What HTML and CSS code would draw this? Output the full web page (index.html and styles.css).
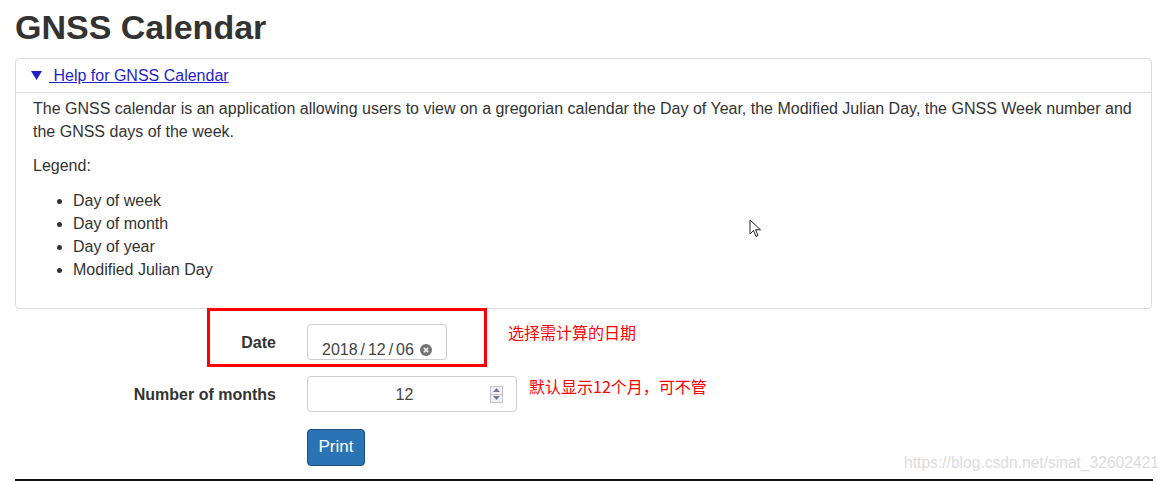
FILE: index.html
```html
<!DOCTYPE html>
<html lang="en">
<head>
<meta charset="utf-8">
<title>GNSS Calendar</title>
<link rel="stylesheet" href="styles.css">
</head>
<body>
<div class="page">
  <h1 class="title">GNSS Calendar</h1>
  <div class="panel">
    <div class="panel-heading">
      <svg class="caret" width="11" height="9" viewBox="0 0 11 9"><path d="M0 0 H11 L5.5 9 Z" fill="#1f1fc8"/></svg>
      <a class="help-link" href="#">&nbsp;Help for GNSS Calendar</a>
    </div>
    <div class="panel-body">
      <p class="para">The GNSS calendar is an application allowing users to view on a gregorian calendar the Day of Year, the Modified Julian Day, the GNSS Week number and the GNSS days of the week.</p>
      <p class="para">Legend:</p>
      <ul class="legend">
        <li>Day of week</li>
        <li>Day of month</li>
        <li>Day of year</li>
        <li>Modified Julian Day</li>
      </ul>
    </div>
  </div>

  <div class="form">
    <div class="row">
      <div class="label">Date</div>
      <div class="date-input">
        <span class="date-text">2018 / 12 / 06</span>
        <svg class="clear" width="12" height="12" viewBox="0 0 12 12"><circle cx="6" cy="6" r="6" fill="#737373"/><path d="M3.8 3.8 L8.2 8.2 M8.2 3.8 L3.8 8.2" stroke="#fff" stroke-width="1.6"/></svg>
      </div>
      <div class="note note-date">选择需计算的日期</div>
      <div class="redbox"></div>
    </div>
    <div class="row">
      <div class="label">Number of months</div>
      <div class="num-input">
        <span class="num-text">12</span>
        <span class="spinner">
          <span class="spin-btn"><svg width="7" height="4" viewBox="0 0 7 4"><path d="M0 4 L3.5 0 L7 4Z" fill="#6b7a99"/></svg></span>
          <span class="spin-btn"><svg width="7" height="4" viewBox="0 0 7 4"><path d="M0 0 L3.5 4 L7 0Z" fill="#6b7a99"/></svg></span>
        </span>
      </div>
      <div class="note note-num">默认显示12个月，可不管</div>
    </div>
    <div class="row">
      <div class="label"></div>
      <button class="btn-print" type="button">Print</button>
    </div>
  </div>
</div>
<div class="watermark">https://blog.csdn.net/sinat_32602421</div>
<div class="bottom-line"></div>
<svg class="cursor" width="14" height="20" viewBox="0 0 14 20"><path d="M1 1 L1 15 L4.5 11.5 L7 17.5 L9 16.5 L6.6 10.8 L11.5 10.8 Z" fill="#fff" stroke="#222" stroke-width="1" stroke-linejoin="round"/></svg>
</body>
</html>
```

FILE: styles.css
```css
html, body {
  margin: 0;
  padding: 0;
  background: #fff;
}
body {
  font-family: "Liberation Sans", Arial, sans-serif;
  font-size: 16px;
  line-height: 23px;
  color: #333;
  position: relative;
  height: 481px;
  overflow: hidden;
}
.page {
  padding: 8px 16px 0 15px;
}
.title {
  margin: 0 0 11px;
  font-size: 34px;
  line-height: 39px;
  font-weight: bold;
  color: #333;
}
.panel {
  border: 1px solid #ddd;
  border-radius: 4px;
}
.panel-heading {
  height: 33px;
  border-bottom: 1px solid #ddd;
  display: flex;
  align-items: center;
  padding: 0 15px;
}
.caret {
  display: block;
  margin-top: -1px;
}
.help-link {
  color: #1f1fc8;
  text-decoration: underline;
  font-size: 16px;
  margin-left: 7px;
}
.panel-body {
  padding: 4px 17px 16px;
}
.para {
  margin: 0 0 11px;
}
.legend {
  margin: 12px 0 11px;
  padding-left: 40px;
}
.para + .legend {
  margin-top: 12px;
}
.form {
  padding-top: 15px;
}
.row {
  display: flex;
  align-items: center;
  height: 36px;
  margin-bottom: 16px;
  position: relative;
}
.label {
  width: 261px;
  text-align: right;
  font-weight: bold;
  font-size: 16px;
  margin-right: 31px;
  flex: none;
}
.date-input {
  border: 1px solid #ccc;
  border-radius: 4px;
  display: flex;
  align-items: center;
  padding: 15px 0 0 14px;
  box-sizing: border-box;
  height: 36px;
  width: 140px;
  font-size: 16px;
  color: #444;
}
.date-text {
  word-spacing: -1.5px;
}
.clear {
  margin-left: 6px;
  margin-top: 1px;
}
.num-input {
  width: 210px;
  height: 36px;
  box-sizing: border-box;
  border: 1px solid #ccc;
  border-radius: 4px;
  display: flex;
  align-items: center;
  position: relative;
  font-size: 16px;
  color: #444;
}
.num-text {
  flex: 1;
  text-align: center;
  padding-left: 11px;
}
.spinner {
  display: flex;
  flex-direction: column;
  width: 13px;
  height: 17px;
  margin-right: 13px;
  border: 1px solid #c3c3c3;
  box-sizing: border-box;
  background: #f1f1f1;
}
.spin-btn {
  flex: 1;
  display: flex;
  align-items: center;
  justify-content: center;
}
.spin-btn + .spin-btn {
  border-top: 1px solid #c3c3c3;
}
.spin-btn svg {
  display: block;
}
.note {
  color: #f00;
  font-family: "Noto Sans CJK SC", sans-serif;
  font-size: 16px;
  line-height: 20px;
}
.note-date {
  margin-left: 61px;
  align-self: flex-start;
  margin-top: -2px;
}
.note-num {
  margin-left: 12px;
  margin-top: -16px;
}
.redbox {
  position: absolute;
  left: 192px;
  top: -16px;
  width: 274px;
  height: 53px;
  border: 3px solid #f00;
  pointer-events: none;
}
.btn-print {
  width: 58px;
  height: 37px;
  background: #2a73b5;
  border: 1px solid #1d4d78;
  border-radius: 4px;
  color: #fff;
  font-family: "Liberation Sans", Arial, sans-serif;
  font-size: 17px;
  padding: 0;
  margin-top: 2px;
}
.watermark {
  position: absolute;
  right: 9px;
  top: 453px;
  color: #dcdcdc;
  font-size: 15.6px;
  line-height: 20px;
}
.bottom-line {
  position: absolute;
  left: 15px;
  right: 15px;
  top: 479px;
  height: 2px;
  background: #111;
}
.cursor {
  position: absolute;
  left: 749px;
  top: 219px;
}
```
